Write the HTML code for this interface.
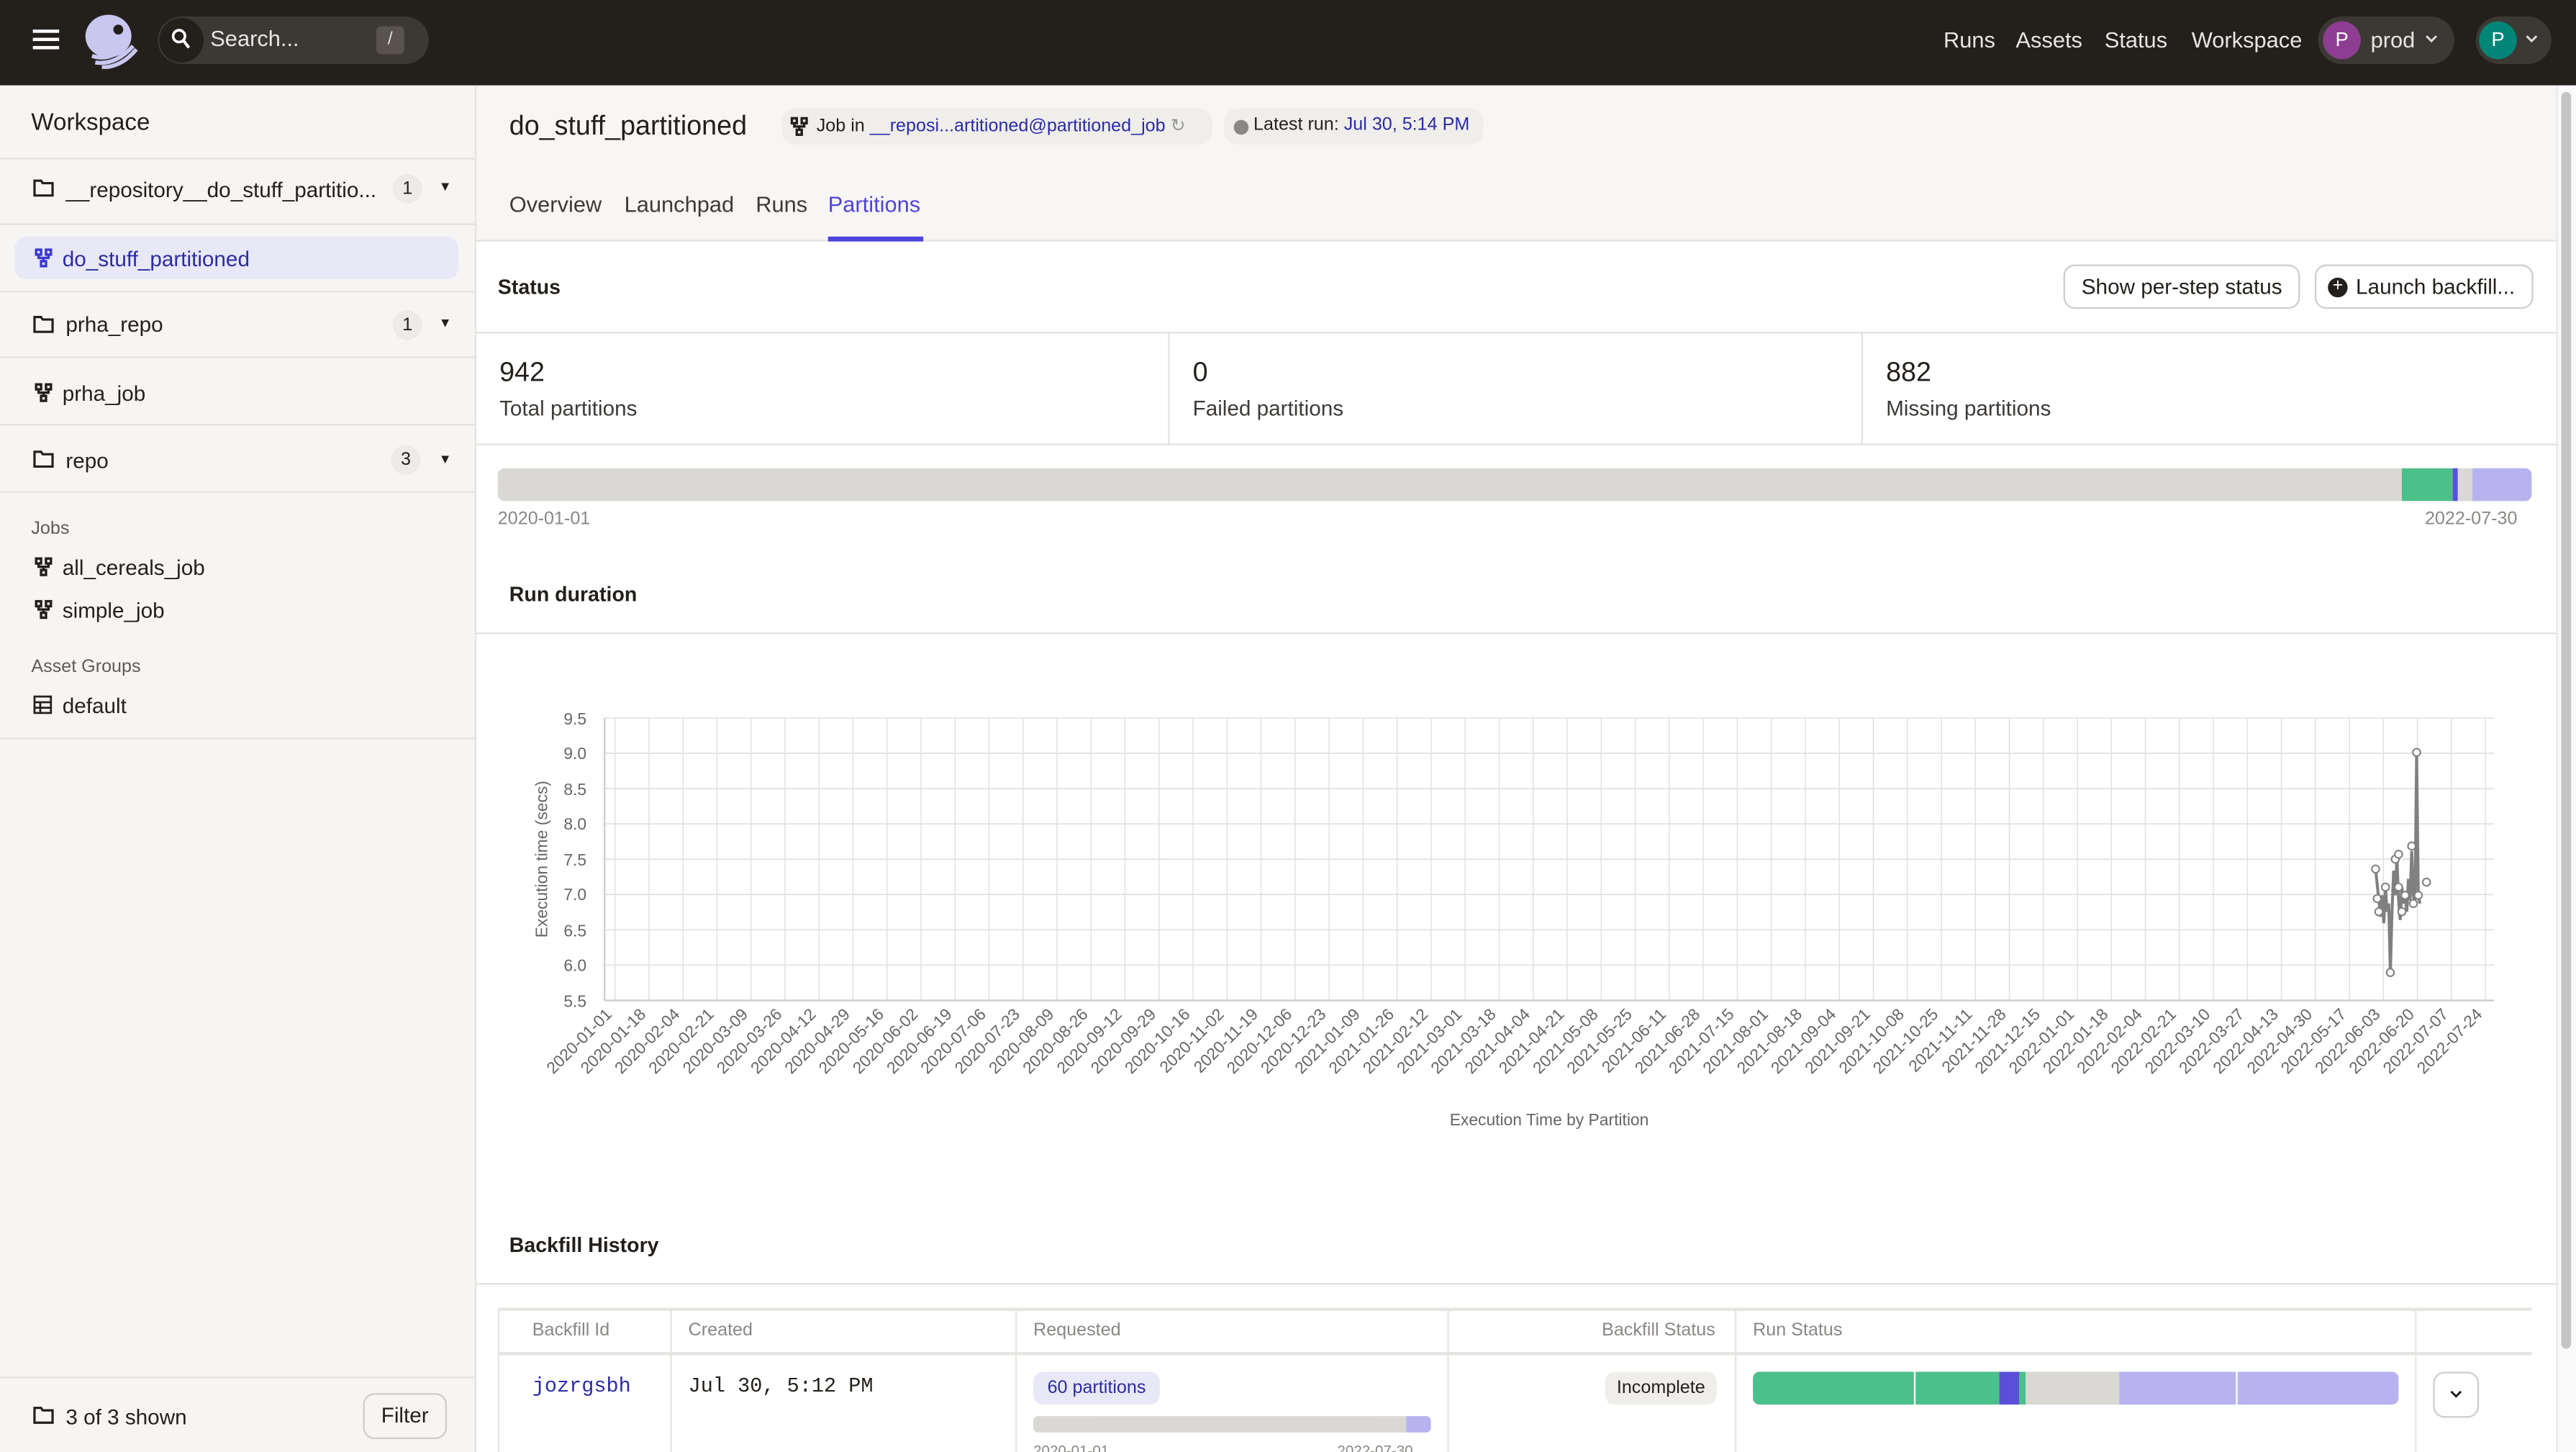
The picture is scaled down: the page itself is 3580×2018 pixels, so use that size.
<!DOCTYPE html>
<html><head><meta charset="utf-8"><style>
*{box-sizing:border-box;margin:0;padding:0}
html,body{width:3580px;height:2018px;overflow:hidden;background:#fff}
#s{width:1568px;height:884px;transform:scale(2.28316);transform-origin:0 0;position:relative;font-family:"Liberation Sans",sans-serif;color:#231f1b;font-size:13px}
.a{position:absolute}
.top{left:0;top:0;width:1568px;height:52px;background:#231f1b}
.nav{color:#e8e6e3;font-size:13.5px;top:17px}
.side{left:0;top:52px;width:290px;height:832px;background:#f6f5f3;border-right:1px solid #e3e2df}
.row{position:absolute;left:0;width:289px;border-bottom:1px solid #e3e2df}
.cnt{position:absolute;width:18px;height:18px;border-radius:9px;background:#ecebe8;font-size:11px;text-align:center;line-height:18px}
.tab{top:117px;font-size:13.5px;color:#3d3a37}
.btn{border:1px solid #cfcdca;border-radius:7px;height:27px;font-size:13px;line-height:25px;padding:0 10px;background:#fff}
.hd{font-size:11px;color:#8a8784}
.vl{position:absolute;top:797px;width:1px;height:87px;background:#e6e5e2}
.fd{position:absolute}
</style></head><body><div id="s">
<div class="a top"></div>
<div class="a" style="left:20px;top:18px;width:16px;height:2px;background:#fff;box-shadow:0 5px 0 #fff,0 10px 0 #fff"></div>
<svg class="a" style="left:50px;top:8px" width="34" height="34" viewBox="0 0 34 34"><ellipse cx="16" cy="14" rx="14" ry="13" fill="#c9c6f0"/><circle cx="22" cy="10" r="3" fill="#231f1b"/><path d="M6 26 Q18 30 28 18 M8 30 Q20 32 31 20 M12 33 Q24 33 33 22" stroke="#c9c6f0" stroke-width="2.5" fill="none"/></svg>
<div class="a" style="left:96px;top:10px;width:165px;height:29px;border-radius:15px;background:#3c3834"></div>
<div class="a" style="left:97px;top:11px;width:27px;height:27px;border-radius:14px;background:#231f1b"></div>
<svg class="a" style="left:104px;top:17px" width="13" height="14"><circle cx="5" cy="5" r="3.6" stroke="#fff" stroke-width="1.6" fill="none"/><path d="M7.5 7.5 L11 12" stroke="#fff" stroke-width="1.8"/></svg>
<div class="a" style="left:128px;top:16px;color:#e8e6e3;font-size:13.5px">Search...</div>
<div class="a" style="left:229px;top:16px;width:17px;height:17px;border-radius:3px;background:#58534e;color:#ddd;font-size:11px;text-align:center;line-height:17px">/</div>
<div class="a nav" style="left:1183px">Runs</div>
<div class="a nav" style="left:1227px">Assets</div>
<div class="a nav" style="left:1281px">Status</div>
<div class="a nav" style="left:1334px">Workspace</div>
<div class="a" style="left:1411px;top:10px;width:83px;height:29px;border-radius:15px;background:#3c3834"></div>
<div class="a" style="left:1414px;top:13px;width:23px;height:23px;border-radius:12px;background:#8e3d92;color:#fff;text-align:center;line-height:23px;font-size:12px">P</div>
<div class="a nav" style="left:1443px">prod</div>
<svg class="a" style="left:1476px;top:21px" width="8" height="6"><path d="M1 1L4 4L7 1" stroke="#ddd" stroke-width="1.3" fill="none"/></svg>
<div class="a" style="left:1507px;top:10px;width:46px;height:29px;border-radius:15px;background:#3c3834"></div>
<div class="a" style="left:1509px;top:13px;width:23px;height:23px;border-radius:12px;background:#008576;color:#fff;text-align:center;line-height:23px;font-size:12px">P</div>
<svg class="a" style="left:1537px;top:21px" width="8" height="6"><path d="M1 1L4 4L7 1" stroke="#ddd" stroke-width="1.3" fill="none"/></svg>

<div class="a side"></div>
<div class="a" style="left:19px;top:67px;font-size:14.5px">Workspace</div>
<div class="row" style="top:96px;height:41px;border-top:1px solid #e3e2df"></div>
<svg class="fd" style="left:20px;top:109px" width="13" height="11"><path d="M1 1H5L6 2.5H12V10H1Z" fill="none" stroke="#231f1b" stroke-width="1.4"/></svg>
<div class="a" style="left:40px;top:108px;font-size:13px">__repository__do_stuff_partitio...</div>
<div class="cnt" style="left:239px;top:106px">1</div><div class="a" style="left:267px;top:109px;font-size:8px">▼</div>
<div class="a" style="left:9px;top:144px;width:270px;height:26px;border-radius:7px;background:#e8e8f6"></div>
<svg class="a" style="left:21px;top:151px" width="11" height="12"><g fill="none" stroke="#3a3acb" stroke-width="1.5"><rect x="1" y="1" width="3" height="3"/><rect x="7" y="1" width="3" height="3"/><rect x="4" y="8" width="3" height="3"/><path d="M2.5 4V6H8.5V4M5.5 6V8"/></g></svg>
<div class="a" style="left:38px;top:150px;color:#2b2ba6;font-size:13px">do_stuff_partitioned</div>
<div class="row" style="top:177px;height:41px;border-top:1px solid #e3e2df"></div>
<svg class="fd" style="left:20px;top:192px" width="13" height="11"><path d="M1 1H5L6 2.5H12V10H1Z" fill="none" stroke="#231f1b" stroke-width="1.4"/></svg>
<div class="a" style="left:40px;top:190px;font-size:13px">prha_repo</div>
<div class="cnt" style="left:239px;top:189px">1</div><div class="a" style="left:267px;top:192px;font-size:8px">▼</div>
<div class="row" style="top:218px;height:41px"></div>
<svg class="a" style="left:21px;top:233px" width="11" height="12"><g fill="none" stroke="#231f1b" stroke-width="1.5"><rect x="1" y="1" width="3" height="3"/><rect x="7" y="1" width="3" height="3"/><rect x="4" y="8" width="3" height="3"/><path d="M2.5 4V6H8.5V4M5.5 6V8"/></g></svg>
<div class="a" style="left:38px;top:232px">prha_job</div>
<div class="row" style="top:259px;height:41px"></div>
<svg class="fd" style="left:20px;top:274px" width="13" height="11"><path d="M1 1H5L6 2.5H12V10H1Z" fill="none" stroke="#231f1b" stroke-width="1.4"/></svg>
<div class="a" style="left:40px;top:273px">repo</div>
<div class="cnt" style="left:238px;top:271px">3</div><div class="a" style="left:267px;top:275px;font-size:8px">▼</div>
<div class="a" style="left:19px;top:316px;font-size:11px;color:#5f5b57">Jobs</div>
<svg class="a" style="left:21px;top:339px" width="11" height="12"><g fill="none" stroke="#231f1b" stroke-width="1.5"><rect x="1" y="1" width="3" height="3"/><rect x="7" y="1" width="3" height="3"/><rect x="4" y="8" width="3" height="3"/><path d="M2.5 4V6H8.5V4M5.5 6V8"/></g></svg>
<div class="a" style="left:38px;top:338px">all_cereals_job</div>
<svg class="a" style="left:21px;top:365px" width="11" height="12"><g fill="none" stroke="#231f1b" stroke-width="1.5"><rect x="1" y="1" width="3" height="3"/><rect x="7" y="1" width="3" height="3"/><rect x="4" y="8" width="3" height="3"/><path d="M2.5 4V6H8.5V4M5.5 6V8"/></g></svg>
<div class="a" style="left:38px;top:364px">simple_job</div>
<div class="a" style="left:19px;top:400px;font-size:11px;color:#5f5b57">Asset Groups</div>
<svg class="a" style="left:20px;top:423px" width="12" height="12"><g fill="none" stroke="#231f1b" stroke-width="1.2"><rect x="1" y="1" width="10" height="10"/><path d="M1 4.5H11M1 7.8H11M4.5 4.5V11"/></g></svg>
<div class="a" style="left:38px;top:422px">default</div>
<div class="row" style="top:449px;height:1px"></div>
<div class="a" style="left:0;top:838px;width:289px;height:1px;background:#e3e2df"></div>
<svg class="fd" style="left:20px;top:856px" width="13" height="11"><path d="M1 1H5L6 2.5H12V10H1Z" fill="none" stroke="#231f1b" stroke-width="1.4"/></svg>
<div class="a" style="left:40px;top:855px">3 of 3 shown</div>
<div class="a btn" style="left:221px;top:848px;height:28px;line-height:26px;background:#f6f5f3">Filter</div>

<div class="a" style="left:290px;top:52px;width:1266px;height:95px;background:#f7f6f4;border-bottom:1px solid #e3e2df"></div>
<div class="a" style="left:310px;top:68px;font-size:16.5px">do_stuff_partitioned</div>
<div class="a" style="left:476px;top:66px;width:262px;height:22px;border-radius:8px;background:#efeeeb"></div>
<svg class="a" style="left:481px;top:71px" width="11" height="12"><g fill="none" stroke="#231f1b" stroke-width="1.5"><rect x="1" y="1" width="3" height="3"/><rect x="7" y="1" width="3" height="3"/><rect x="4" y="8" width="3" height="3"/><path d="M2.5 4V6H8.5V4M5.5 6V8"/></g></svg>
<div class="a" style="left:497px;top:70px;font-size:11px">Job in <span style="color:#2b2ba6">__reposi...artitioned@partitioned_job</span> <span style="color:#999">↻</span></div>
<div class="a" style="left:745px;top:66px;width:158px;height:22px;border-radius:8px;background:#efeeeb"></div>
<div class="a" style="left:751px;top:73px;width:9px;height:9px;border-radius:5px;background:#8a8784"></div>
<div class="a" style="left:763px;top:70px;font-size:11px">Latest run: <span style="color:#2b2ba6">Jul 30, 5:14 PM</span></div>
<div class="a tab" style="left:310px">Overview</div>
<div class="a tab" style="left:380px">Launchpad</div>
<div class="a tab" style="left:460px">Runs</div>
<div class="a tab" style="left:504px;color:#4f43dd">Partitions</div>
<div class="a" style="left:504px;top:144px;width:58px;height:3px;background:#4f43dd"></div>

<div class="a" style="left:303px;top:168px;font-weight:bold;font-size:12.5px">Status</div>
<div class="a btn" style="left:1256px;top:161px">Show per-step status</div>
<div class="a btn" style="left:1409px;top:161px;padding-left:24px">Launch backfill...</div>
<div class="a" style="left:1417px;top:169px;width:12px;height:12px;border-radius:6px;background:#231f1b;color:#fff;font-size:11px;line-height:11px;text-align:center">+</div>
<div class="a" style="left:290px;top:202px;width:1266px;height:69px;border-top:1px solid #e3e2df;border-bottom:1px solid #e3e2df"></div>
<div class="a" style="left:711px;top:203px;width:1px;height:67px;background:#e3e2df"></div>
<div class="a" style="left:1133px;top:203px;width:1px;height:67px;background:#e3e2df"></div>
<div class="a" style="left:304px;top:218px;font-size:16.5px">942</div><div class="a" style="left:304px;top:241px;color:#3d3a37">Total partitions</div>
<div class="a" style="left:726px;top:218px;font-size:16.5px">0</div><div class="a" style="left:726px;top:241px;color:#3d3a37">Failed partitions</div>
<div class="a" style="left:1148px;top:218px;font-size:16.5px">882</div><div class="a" style="left:1148px;top:241px;color:#3d3a37">Missing partitions</div>
<div class="a" style="left:303px;top:285px;width:1238px;height:20px;border-radius:4px;background:#d9d8d5;overflow:hidden"><div class="a" style="left:1159px;top:0;width:31px;height:20px;background:#4bc08a"></div><div class="a" style="left:1190px;top:0;width:3px;height:20px;background:#5b4fd8"></div><div class="a" style="left:1202px;top:0;width:36px;height:20px;background:#b8b3ef"></div></div>
<div class="a" style="left:303px;top:310px;font-size:11px;color:#8a8784">2020-01-01</div>
<div class="a" style="left:1476px;top:310px;font-size:11px;color:#8a8784">2022-07-30</div>
<div class="a" style="left:310px;top:355px;font-weight:bold;font-size:12.5px">Run duration</div>
<div class="a" style="left:290px;top:385px;width:1266px;height:1px;background:#e3e2df"></div>

<svg class="a" style="left:290px;top:385px" width="1266" height="360" viewBox="290 385 1266 360" font-family="Liberation Sans, sans-serif">
<defs><pattern id="g" x="374" y="0" width="20.7" height="10" patternUnits="userSpaceOnUse"><line x1="0.3" y1="0" x2="0.3" y2="10" stroke="#e2e2e2" stroke-width="0.8"/></pattern></defs>
<rect x="368" y="437" width="1150" height="172" fill="url(#g)"/>
<g stroke="#e2e2e2" stroke-width="0.8"><line x1="368" y1="437" x2="1518" y2="437"/><line x1="368" y1="458.5" x2="1518" y2="458.5"/><line x1="368" y1="480" x2="1518" y2="480"/><line x1="368" y1="501.5" x2="1518" y2="501.5"/><line x1="368" y1="523" x2="1518" y2="523"/><line x1="368" y1="544.5" x2="1518" y2="544.5"/><line x1="368" y1="566" x2="1518" y2="566"/><line x1="368" y1="587.5" x2="1518" y2="587.5"/></g>
<line x1="368" y1="437" x2="368" y2="609" stroke="#ccc"/><line x1="368" y1="609" x2="1518" y2="609" stroke="#ccc"/>
<g font-size="10" fill="#666" text-anchor="end"><text x="357" y="441">9.5</text><text x="357" y="462">9.0</text><text x="357" y="484">8.5</text><text x="357" y="505">8.0</text><text x="357" y="527">7.5</text><text x="357" y="548">7.0</text><text x="357" y="570">6.5</text><text x="357" y="591">6.0</text><text x="357" y="613">5.5</text></g>
<text transform="translate(333,523) rotate(-90)" font-size="10" fill="#666" text-anchor="middle">Execution time (secs)</text>
<text x="943" y="685" font-size="10" fill="#666" text-anchor="middle">Execution Time by Partition</text>
<g font-size="10" fill="#666" text-anchor="end" transform="translate(-4,0)">
<text transform="translate(377,618) rotate(-45)">2020-01-01</text>
<text transform="translate(397.7,618) rotate(-45)">2020-01-18</text>
<text transform="translate(418.4,618) rotate(-45)">2020-02-04</text>
<text transform="translate(439.1,618) rotate(-45)">2020-02-21</text>
<text transform="translate(459.8,618) rotate(-45)">2020-03-09</text>
<text transform="translate(480.5,618) rotate(-45)">2020-03-26</text>
<text transform="translate(501.2,618) rotate(-45)">2020-04-12</text>
<text transform="translate(521.9,618) rotate(-45)">2020-04-29</text>
<text transform="translate(542.6,618) rotate(-45)">2020-05-16</text>
<text transform="translate(563.3,618) rotate(-45)">2020-06-02</text>
<text transform="translate(584,618) rotate(-45)">2020-06-19</text>
<text transform="translate(604.7,618) rotate(-45)">2020-07-06</text>
<text transform="translate(625.4,618) rotate(-45)">2020-07-23</text>
<text transform="translate(646.1,618) rotate(-45)">2020-08-09</text>
<text transform="translate(666.8,618) rotate(-45)">2020-08-26</text>
<text transform="translate(687.5,618) rotate(-45)">2020-09-12</text>
<text transform="translate(708.2,618) rotate(-45)">2020-09-29</text>
<text transform="translate(728.9,618) rotate(-45)">2020-10-16</text>
<text transform="translate(749.6,618) rotate(-45)">2020-11-02</text>
<text transform="translate(770.3,618) rotate(-45)">2020-11-19</text>
<text transform="translate(791,618) rotate(-45)">2020-12-06</text>
<text transform="translate(811.7,618) rotate(-45)">2020-12-23</text>
<text transform="translate(832.4,618) rotate(-45)">2021-01-09</text>
<text transform="translate(853.1,618) rotate(-45)">2021-01-26</text>
<text transform="translate(873.8,618) rotate(-45)">2021-02-12</text>
<text transform="translate(894.5,618) rotate(-45)">2021-03-01</text>
<text transform="translate(915.2,618) rotate(-45)">2021-03-18</text>
<text transform="translate(935.9,618) rotate(-45)">2021-04-04</text>
<text transform="translate(956.6,618) rotate(-45)">2021-04-21</text>
<text transform="translate(977.3,618) rotate(-45)">2021-05-08</text>
<text transform="translate(998,618) rotate(-45)">2021-05-25</text>
<text transform="translate(1018.7,618) rotate(-45)">2021-06-11</text>
<text transform="translate(1039.4,618) rotate(-45)">2021-06-28</text>
<text transform="translate(1060.1,618) rotate(-45)">2021-07-15</text>
<text transform="translate(1080.8,618) rotate(-45)">2021-08-01</text>
<text transform="translate(1101.5,618) rotate(-45)">2021-08-18</text>
<text transform="translate(1122.2,618) rotate(-45)">2021-09-04</text>
<text transform="translate(1142.9,618) rotate(-45)">2021-09-21</text>
<text transform="translate(1163.6,618) rotate(-45)">2021-10-08</text>
<text transform="translate(1184.3,618) rotate(-45)">2021-10-25</text>
<text transform="translate(1205,618) rotate(-45)">2021-11-11</text>
<text transform="translate(1225.7,618) rotate(-45)">2021-11-28</text>
<text transform="translate(1246.4,618) rotate(-45)">2021-12-15</text>
<text transform="translate(1267.1,618) rotate(-45)">2022-01-01</text>
<text transform="translate(1287.8,618) rotate(-45)">2022-01-18</text>
<text transform="translate(1308.5,618) rotate(-45)">2022-02-04</text>
<text transform="translate(1329.2,618) rotate(-45)">2022-02-21</text>
<text transform="translate(1349.9,618) rotate(-45)">2022-03-10</text>
<text transform="translate(1370.6,618) rotate(-45)">2022-03-27</text>
<text transform="translate(1391.3,618) rotate(-45)">2022-04-13</text>
<text transform="translate(1412,618) rotate(-45)">2022-04-30</text>
<text transform="translate(1432.7,618) rotate(-45)">2022-05-17</text>
<text transform="translate(1453.4,618) rotate(-45)">2022-06-03</text>
<text transform="translate(1474.1,618) rotate(-45)">2022-06-20</text>
<text transform="translate(1494.8,618) rotate(-45)">2022-07-07</text>
<text transform="translate(1515.5,618) rotate(-45)">2022-07-24</text>
</g>
<polyline fill="none" stroke="#808080" stroke-width="1.8" points="1446,529 1448,548 1449,558 1450,545 1451,562 1452,540 1453,555 1454,550 1455,592 1456,555 1457,530 1458,545 1459,522 1460,548 1461,560 1462,540 1463,550 1464,545 1465,555 1466,535 1467,548 1468,518 1469,545 1470,550 1471,458 1472,545 1473,550"/>
<g fill="#fff" stroke="#808080" stroke-width="0.9"><circle cx="1446" cy="529" r="2.3"/><circle cx="1447" cy="547" r="2.3"/><circle cx="1448" cy="555" r="2.3"/><circle cx="1452" cy="540" r="2.3"/><circle cx="1455" cy="592" r="2.3"/><circle cx="1458" cy="523" r="2.3"/><circle cx="1460" cy="520" r="2.3"/><circle cx="1460" cy="540" r="2.3"/><circle cx="1462" cy="555" r="2.3"/><circle cx="1464" cy="545" r="2.3"/><circle cx="1468" cy="515" r="2.3"/><circle cx="1469" cy="550" r="2.3"/><circle cx="1471" cy="458" r="2.3"/><circle cx="1472" cy="545" r="2.3"/><circle cx="1477" cy="537" r="2.3"/></g>
</svg>

<div class="a" style="left:310px;top:751px;font-weight:bold;font-size:12.5px">Backfill History</div>
<div class="a" style="left:290px;top:781px;width:1266px;height:1px;background:#e3e2df"></div>
<div class="a" style="left:303px;top:796px;width:1238px;height:2px;background:#e6e5e2"></div>
<div class="a" style="left:303px;top:823px;width:1238px;height:2px;background:#e6e5e2"></div>
<div class="vl" style="left:303px"></div><div class="vl" style="left:408px"></div><div class="vl" style="left:618px"></div><div class="vl" style="left:881px"></div><div class="vl" style="left:1056px"></div><div class="vl" style="left:1470px"></div>
<div class="a hd" style="left:324px;top:804px">Backfill Id</div>
<div class="a hd" style="left:419px;top:804px">Created</div>
<div class="a hd" style="left:629px;top:804px">Requested</div>
<div class="a hd" style="left:975px;top:804px">Backfill Status</div>
<div class="a hd" style="left:1067px;top:804px">Run Status</div>
<div class="a" style="left:324px;top:837px;font-family:'Liberation Mono',monospace;color:#2b2ba6;font-size:12.5px">jozrgsbh</div>
<div class="a" style="left:419px;top:837px;font-family:'Liberation Mono',monospace;font-size:12.5px">Jul 30, 5:12 PM</div>
<div class="a" style="left:629px;top:835px;width:77px;height:20px;border-radius:6px;background:#e8e8f6;color:#2b2ba6;font-size:11px;line-height:20px;text-align:center">60 partitions</div>
<div class="a" style="left:629px;top:862px;width:242px;height:10px;border-radius:3px;background:#d9d8d5;overflow:hidden"><div class="a" style="left:227px;top:0;width:15px;height:10px;background:#b8b3ef"></div></div>
<div class="a" style="left:629px;top:878px;font-size:9px;color:#8a8784">2020-01-01</div><div class="a" style="left:814px;top:878px;font-size:9px;color:#8a8784">2022-07-30</div>
<div class="a" style="left:977px;top:835px;width:68px;height:20px;border-radius:6px;background:#efeeeb;font-size:11px;line-height:20px;text-align:center">Incomplete</div>
<div class="a" style="left:1067px;top:835px;width:393px;height:20px;border-radius:4px;overflow:hidden;background:#b8b3ef"><div class="a" style="left:0;top:0;width:150px;height:20px;background:#4bc08a"></div><div class="a" style="left:98px;top:0;width:1px;height:20px;background:#fff"></div><div class="a" style="left:150px;top:0;width:12px;height:20px;background:#5b4fd8"></div><div class="a" style="left:162px;top:0;width:4px;height:20px;background:#4bc08a"></div><div class="a" style="left:166px;top:0;width:57px;height:20px;background:#d9d8d5"></div><div class="a" style="left:294px;top:0;width:1px;height:20px;background:#fff"></div></div>
<div class="a" style="left:1481px;top:835px;width:28px;height:28px;border:1px solid #cfcdca;border-radius:7px"></div>
<svg class="a" style="left:1491px;top:846px" width="8" height="6"><path d="M1 1L4 4L7 1" stroke="#231f1b" stroke-width="1.3" fill="none"/></svg>
<div class="a" style="left:1556px;top:52px;width:12px;height:832px;background:#fafafa;border-left:1px solid #e8e8e8"></div>
<div class="a" style="left:1559px;top:56px;width:6px;height:765px;border-radius:3px;background:#c4c4c4"></div>
</div></body></html>
